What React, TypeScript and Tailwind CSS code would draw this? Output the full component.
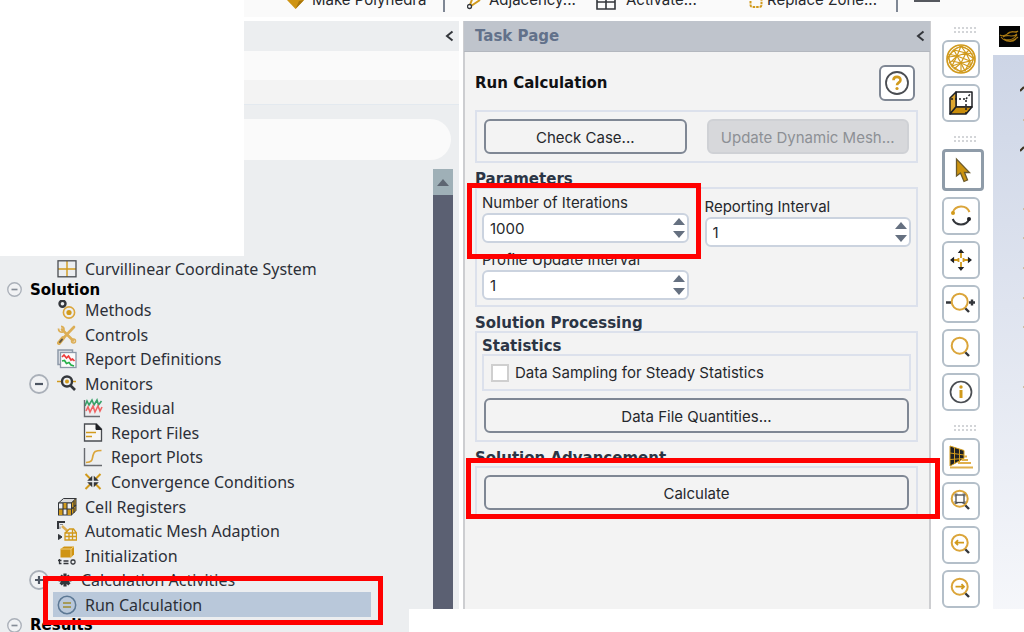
import { useId, useState } from "react";
import type { ReactNode } from "react";

const GOLD = "#d19a1c";
const DARK = "#33363b";

function Svg({ size = 20, children }: { size?: number; children: ReactNode }) {
  return (
    <svg width={size} height={size} viewBox="0 0 20 20" fill="none" aria-hidden="true" className="shrink-0">
      {children}
    </svg>
  );
}

/* ---------- tree icons ---------- */

const CoordinateIcon = () => (
  <Svg>
    <path d="M10 2v16M1 10h18" stroke={GOLD} strokeWidth="1.4" />
    <rect x="1" y="1.8" width="18" height="16" stroke="#4a4d52" strokeWidth="1.3" />
  </Svg>
);
const MethodsIcon = () => (
  <Svg>
    <circle cx="5.5" cy="3.700" r="3" stroke={DARK} strokeWidth="2.4" />
    <circle cx="12" cy="12.500" r="5.6" stroke="#dba53a" strokeWidth="1.6" />
    <circle cx="12" cy="12.500" r="2.6" fill={GOLD} />
  </Svg>
);
const ControlsIcon = () => (
  <Svg>
    <path d="M5 4.500l11 11" stroke="#dcae56" strokeWidth="2.6" strokeLinecap="round" />
    <path d="M1.5 3.5c0 3 2 4.200 4.500 3.500M4 1.500c2.500 0 3.500 2 2.700 4.500" stroke="#dcae56" strokeWidth="1.8" />
    <path d="M17 2L6 13.500" stroke="#dcae56" strokeWidth="2.600" strokeLinecap="round" />
    <path d="M6 13l-4 5" stroke="#dcae56" strokeWidth="4" strokeLinecap="round" />
    <path d="M5 14.500l-2 2.500" stroke="#5a5346" strokeWidth="2" strokeLinecap="round" />
    <circle cx="16.500" cy="16" r="2" stroke="#dcae56" strokeWidth="1.500" />
  </Svg>
);
const DefinitionsIcon = () => (
  <Svg>
    <path d="M1 1h14.500v14.500H1z" fill="#dfe3e8" stroke="#8d99a8" strokeWidth="1.500" />
    <rect x="3.500" y="3.500" width="15.500" height="15" fill="#fbfbfb" stroke="#8d99a8" strokeWidth="1.300" />
    <path d="M5 8l2-2 2.500 3 2-2 2.500 4 1.500-1 2 2" stroke="#ee3a3a" strokeWidth="1.700" />
    <path d="M5 12l2.500-.5 2 3 2.500-1 2 2.500 3 1" stroke="#27b04a" strokeWidth="1.700" />
  </Svg>
);
const MonitorsIcon = () => (
  <Svg>
    <path d="M0 7.500h4M15 7.500h4" stroke={GOLD} strokeWidth="1.400" />
    <circle cx="10" cy="7.500" r="5" stroke={DARK} strokeWidth="2.400" />
    <circle cx="10" cy="7.500" r="2" fill={GOLD} />
    <path d="M13 11l5 5" stroke={DARK} strokeWidth="2.600" />
  </Svg>
);
const ResidualIcon = () => (
  <Svg>
    <path d="M2 8l2-5 2 4 3-5 2 5 3-5 1.500 5 3-4" stroke="#38a169" strokeWidth="1.600" />
    <path d="M3 13l2-4 2 5 3-6 2 6 3-6 2 5 2-4" stroke="#f06464" strokeWidth="1.600" />
    <path d="M1.500 2v16.500H17" stroke="#686b70" strokeWidth="1.400" />
  </Svg>
);
const FileIcon = () => (
  <Svg>
    <path d="M1.500 1h12l5 5v12h-17z" stroke="#4a4d52" strokeWidth="1.300" fill="#f6f6f6" />
    <path d="M13 1v5.500h5.500z" fill="#1f2125" stroke="#1f2125" />
    <path d="M3 9.500h10M3 13.500h6" stroke={GOLD} strokeWidth="1.700" />
  </Svg>
);
const PlotIcon = () => (
  <Svg>
    <path d="M3 15.500c7-.5 6-3 7-7s2-5 8.500-5" stroke="#dba53a" strokeWidth="1.700" />
    <path d="M1.500 1v17.500H19" stroke="#686b70" strokeWidth="1.400" />
  </Svg>
);
const ConvergenceIcon = () => (
  <Svg>
    <path d="M2.500 2l5 5M17.500 2l-5 5M2.500 17l5-5M17.500 17l-5-5" stroke={GOLD} strokeWidth="2" />
    <path d="M6 8h2.500V5.500zM14 8h-2.500V5.500zM6 11h2.500v2.500zM14 11h-2.500v2.500z" fill={DARK} stroke={DARK} strokeWidth="1.500" />
  </Svg>
);
const CellsIcon = () => (
  <Svg>
    <path d="M1.500 6l5-4.500H19l-4.500 4.500z" fill="#d9d9d9" stroke={DARK} />
    <path d="M14.500 6L19 1.500v12L14.500 18z" fill={GOLD} stroke={DARK} />
    <rect x="1.500" y="6" width="13" height="12" fill="#eee" stroke={DARK} />
    <path d="M6 6h4v6H6zM2 12h4v6H2zM10 12h4v6h-4z" fill={GOLD} />
    <path d="M6 6v12M10 6v12M1.500 12h13M17 4v12M14.500 12l4.500-4" stroke={DARK} strokeWidth="1.100" />
  </Svg>
);
const AdaptionIcon = () => (
  <Svg>
    <path d="M8 1H1v7" stroke={DARK} strokeWidth="2.200" />
    <path d="M3 3.500h3M3 5.500V8" stroke="#8a8d92" />
    <path d="M1.500 13.500l3.500 2.500-3.500 2.500z" fill={DARK} stroke={DARK} />
    <path d="M5 5l6 5.500" stroke="#dcae56" strokeWidth="2.400" />
    <path d="M8 12h11.500v7H8zM8 12l4.500-4h4l3 4M8 15.500h11.500M12 12v7M15.500 8.500V19" stroke={GOLD} strokeWidth="1.300" />
  </Svg>
);
const InitializationIcon = () => (
  <Svg>
    <path d="M3.500 3L7 .5h10v8l-3 3H3.500z" fill="#cf9413" />
    <path d="M3.500 3h10.500l3-2.500M14 3v8" stroke="#f0cd7c" />
    <path d="M2.500 13v4.500h2M1 14.500h3.500M6.500 15h5M6.500 17.500h5" stroke={DARK} strokeWidth="1.300" />
    <rect x="14" y="14" width="4" height="4" rx="1.500" stroke={DARK} strokeWidth="1.300" />
  </Svg>
);
const ActivitiesIcon = () => (
  <Svg size={16}>
    <path d="M10 2v16M2 10h16M4.500 4.500l11 11M15.500 4.500l-11 11" stroke={DARK} strokeWidth="4" />
    <circle cx="10" cy="10" r="5" fill={DARK} />
  </Svg>
);
const RunIcon = () => (
  <Svg>
    <circle cx="10" cy="10" r="8.700" stroke="#5c7894" strokeWidth="1.500" />
    <path d="M6 8h8M6 12h8" stroke="#a59a58" strokeWidth="1.800" />
  </Svg>
);

function Expander({ open, large }: { open: boolean; large?: boolean }) {
  return (
    <svg width={large ? 20 : 15} height={large ? 20 : 15} viewBox="0 0 20 20" fill="none" aria-hidden="true">
      <circle cx="10" cy="10" r="9" fill="#f1f2f4" stroke="#aab0b9" strokeWidth="1.800" />
      <path d={open ? "M6 10h8" : "M6 10h8M10 6v8"} stroke={large ? "#4d5562" : "#858c97"} strokeWidth="2.200" />
    </svg>
  );
}

type Node = { label: string; icon: ReactNode; level: 1 | 2; expander?: "open" | "closed"; selected?: boolean };

const nodes: Node[] = [
  { label: "Methods", icon: <MethodsIcon />, level: 1 },
  { label: "Controls", icon: <ControlsIcon />, level: 1 },
  { label: "Report Definitions", icon: <DefinitionsIcon />, level: 1 },
  { label: "Monitors", icon: <MonitorsIcon />, level: 1, expander: "open" },
  { label: "Residual", icon: <ResidualIcon />, level: 2 },
  { label: "Report Files", icon: <FileIcon />, level: 2 },
  { label: "Report Plots", icon: <PlotIcon />, level: 2 },
  { label: "Convergence Conditions", icon: <ConvergenceIcon />, level: 2 },
  { label: "Cell Registers", icon: <CellsIcon />, level: 1 },
  { label: "Automatic Mesh Adaption", icon: <AdaptionIcon />, level: 1 },
  { label: "Initialization", icon: <InitializationIcon />, level: 1 },
  { label: "Calculation Activities", icon: <ActivitiesIcon />, level: 1, expander: "closed" },
  { label: "Run Calculation", icon: <RunIcon />, level: 1, selected: true },
];

function Highlight({ className }: { className: string }) {
  return <div aria-hidden="true" className={`pointer-events-none absolute z-10 border-[5px] border-[#ff0000] ${className}`} />;
}

function TreeRow({ node }: { node: Node }) {
  return (
    <li className="relative flex min-h-0 flex-1 items-center">
      <span className="flex w-[53px] shrink-0 justify-end pr-1">
        {node.expander && (
          <button type="button" aria-label={`Toggle ${node.label}`}>
            <Expander open={node.expander === "open"} large />
          </button>
        )}
      </span>
      <span className={`flex h-full flex-1 items-center pl-1 ${node.selected ? "mr-[62px] bg-[#b9c8da]" : ""}`}>
        {node.level === 2 && <span className="w-[26px]" />}
        {node.icon}
        <span className="pl-2">{node.label}</span>
      </span>
      {node.selected && <Highlight className="-top-4 right-[50px] -bottom-2 left-[43px]" />}
    </li>
  );
}

function Branch({ label, className }: { label: string; className: string }) {
  return (
    <div className={`flex items-center pl-[7px] font-['DejaVu_Sans',sans-serif] text-[15px] font-bold text-black ${className}`}>
      <button type="button" aria-label={`Toggle ${label}`} className="w-[23px]">
        <Expander open />
      </button>
      {label}
    </div>
  );
}

function Collapse({ label }: { label: string }) {
  return (
    <button type="button" aria-label={label} className="flex">
      <svg width="9" height="12" viewBox="0 0 9 12" fill="none" aria-hidden="true">
        <path d="M7.500 1.500L2 6l5.500 4.500" stroke="#33363b" strokeWidth="2" />
      </svg>
    </button>
  );
}

function OutlinePanel() {
  return (
    <aside className="flex w-[459px] shrink-0 flex-col bg-[#eceef0]">
      <div className="flex h-[30px] shrink-0 items-center justify-end pr-[5px]">
        <Collapse label="Collapse outline" />
      </div>
      <div className="h-[29px] shrink-0 bg-[#fafafa]" />
      <div className="h-[25px] shrink-0 border-b border-[#e3e9ef] bg-[#f3f3f3]" />
      <div className="shrink-0 pt-[14px] pr-2 pb-[9px]">
        <input type="search" aria-label="Filter" className="block h-[41px] w-full rounded-full bg-[#fafafa] outline-none" />
      </div>
      <div className="flex min-h-0 flex-1 pr-[6px]">
        <div className="min-w-0 flex-1 pt-[88px] font-['Noto_Sans',sans-serif] text-[16px] leading-5 text-[#2c3038]">
          <div className="flex h-6 items-center pl-[57px]">
            <CoordinateIcon />
            <span className="pl-2">Curvillinear Coordinate System</span>
          </div>
          <Branch label="Solution" className="h-[17px]" />
          <ul className="flex h-[319px] flex-col">
            {nodes.map((node) => (
              <TreeRow key={node.label} node={node} />
            ))}
          </ul>
          <Branch label="Results" className="h-4" />
        </div>
        <div className="w-5 bg-[#5b6072]">
          <button type="button" aria-label="Scroll up" className="flex h-[26px] w-full items-center justify-center bg-[#9fb0b7]">
            <svg width="12" height="7" viewBox="0 0 12 7" aria-hidden="true">
              <path d="M0 7l6-7 6 7z" fill="#5e6672" />
            </svg>
          </button>
        </div>
      </div>
    </aside>
  );
}

/* ---------- task page ---------- */

function Spinner({ label, initial, children }: { label: string; initial: number; children?: ReactNode }) {
  const id = useId();
  const [value, setValue] = useState(initial);
  return (
    <div className="relative">
      <label htmlFor={id} className="flex h-5 items-center">
        {label}
      </label>
      <div className="flex h-[30px] rounded-md border-2 border-[#cbd3df] bg-white">
        <input
          id={id}
          type="number"
          value={value}
          onChange={(e) => setValue(Number(e.target.value))}
          className="min-w-0 flex-1 appearance-none bg-transparent pt-[2px] pl-[6px] outline-none [appearance:textfield] [&::-webkit-inner-spin-button]:appearance-none"
        />
        <div className="flex w-[14px] flex-col justify-between py-[3px]">
          <button type="button" aria-label={`Increase ${label}`} onClick={() => setValue(value + 1)}>
            <svg width="12" height="7" viewBox="0 0 12 7" aria-hidden="true">
              <path d="M0 7l6-7 6 7z" fill="#657080" />
            </svg>
          </button>
          <button type="button" aria-label={`Decrease ${label}`} onClick={() => setValue(value - 1)}>
            <svg width="12" height="7" viewBox="0 0 12 7" aria-hidden="true">
              <path d="M0 0l6 7 6-7z" fill="#657080" />
            </svg>
          </button>
        </div>
      </div>
      {children}
    </div>
  );
}

function PushButton({ children, disabled }: { children: ReactNode; disabled?: boolean }) {
  return (
    <button
      type="button"
      disabled={disabled}
      className="h-[35px] min-w-0 flex-1 rounded-md border-2 border-[#7f8794] pt-[3px] disabled:border-[#cfd1d5] disabled:bg-[#d7d8db] disabled:text-[#8d9095]"
    >
      {children}
    </button>
  );
}

const headingFont = "font-['DejaVu_Sans',sans-serif] text-[15px] leading-4 font-bold";

function Heading({ children }: { children: ReactNode }) {
  return <h3 className={`flex h-6 items-end text-[#2b3545] ${headingFont}`}>{children}</h3>;
}

function TaskPage() {
  return (
    <section className="ml-1 flex w-[468px] shrink-0 flex-col border-x-2 border-[#cdced1] bg-[#f3f3f3] font-['Inter',sans-serif] text-[15px] text-[#26282c]">
      <header className="-mx-px flex h-[31px] shrink-0 items-center justify-between border-b border-[#b3b7be] bg-[#bfc4cc] pr-[5px] pl-[11px]">
        <h1 className={`text-[#62718a] ${headingFont}`}>Task Page</h1>
        <Collapse label="Collapse task page" />
      </header>
      <div className="pt-[13px] pr-[11px] pl-[10px]">
        <div className="flex h-9 items-center justify-between pr-[3px]">
          <h2 className={`text-[#101113] ${headingFont}`}>Run Calculation</h2>
          <button type="button" aria-label="Help" className="flex size-9 items-center justify-center rounded-md border-2 border-[#7f8794] bg-white">
            <svg width="26" height="26" viewBox="0 0 26 26" fill="none" aria-hidden="true">
              <circle cx="13" cy="13" r="11" stroke="#4a4d52" strokeWidth="1.800" />
              <path d="M9.500 10.200c0-4.500 7-4.300 7-.3 0 2.800-3.500 2.600-3.500 5.300" stroke={GOLD} strokeWidth="2.600" />
              <circle cx="13" cy="18.500" r="1.600" fill={GOLD} />
            </svg>
          </button>
        </div>
        <div className="mt-[9px] flex gap-5 border-2 border-[#dce1ec] p-[7px]">
          <PushButton>Check Case...</PushButton>
          <PushButton disabled>Update Dynamic Mesh...</PushButton>
        </div>
        <Heading>Parameters</Heading>
        <div className="grid grid-cols-2 gap-x-4 border-2 border-[#dce1ec] px-[5px] pt-1 pb-[5px]">
          <div className="flex flex-col gap-[7px]">
            <Spinner label="Number of Iterations" initial={1000}>
              <Highlight className="-top-[10px] -right-3 -bottom-4 -left-[15px]" />
            </Spinner>
            <Spinner label="Profile Update Interval" initial={1} />
          </div>
          <div className="pt-1">
            <Spinner label="Reporting Interval" initial={1} />
          </div>
        </div>
        <Heading>Solution Processing</Heading>
        <div className="border-2 border-[#dce1ec] px-[5px] pt-[5px] pb-[7px]">
          <h4 className={`text-[#2b3545] ${headingFont}`}>Statistics</h4>
          <label className="flex h-[37px] items-center gap-[6px] border-2 border-[#dce1ec] pl-[7px]">
            <input type="checkbox" className="size-[18px] appearance-none border-2 border-[#cfcfcf] bg-white checked:bg-[#657080]" />
            <span className="pt-[2px]">Data Sampling for Steady Statistics</span>
          </label>
          <div className="mt-[7px] flex px-[2px]">
            <PushButton>Data File Quantities...</PushButton>
          </div>
        </div>
        <Heading>Solution Advancement</Heading>
        <div className="relative flex border-2 border-[#dce1ec] px-[7px] pt-[7px] pb-[5px]">
          <PushButton>Calculate</PushButton>
          <Highlight className="-top-[10px] -right-[24px] -bottom-1 -left-[11px]" />
        </div>
      </div>
    </section>
  );
}

/* ---------- view tools ---------- */

const Lens = ({ children }: { children?: ReactNode }) => (
  <>
    <path d="M15.500 15.500l4.500 4.500" stroke={DARK} strokeWidth="2.400" />
    <circle cx="10.700" cy="9.700" r="8" stroke="#dba53a" strokeWidth="2" />
    {children}
  </>
);

const toolGroups: { label: string; drawing: ReactNode; active?: boolean }[][] = [
  [
    {
      label: "Display mesh",
      drawing: (
        <g stroke={GOLD} strokeWidth="1.200">
          <circle cx="12" cy="12" r="14" strokeWidth="1.700" />
          <circle cx="12" cy="12" r="12" strokeWidth=".8" />
          <path d="M12-1L5 3l-6 7 4 9 9 6 9-5 4-9-5-8zM5 3l3 6 9-3 3-3M8 9l-9 1M8 9l4 7 9-2-4-8M12 16l-9 3M12 16v9M21 14v6M12 16l9 4M8 9l-5 10M17 6l8 6-4 2M5 3l12 3M12-1l5 7M12 16L17 6M3 19L-1 10" />
          <path d="M8 9l13 5M12-1L8 9M3 14l9 2M5 22l7-6M16 24l-4-8M16 24l5-10M-1 7l9 2M17 6l7 1M0 16l3-2 5-5" />
        </g>
      ),
    },
    {
      label: "View orientation",
      drawing: (
        <g stroke="#1f2125" strokeWidth="1.500" strokeLinejoin="round">
          <path d="M7 1h16v15H7z" fill="#fff" />
          <path d="M1 7l6-6v15l-6 7z" fill="#dda62f" />
          <path d="M1 23l6-7h16l-6 7z" fill="#c98d0c" />
          <path d="M2 8h15v15M17 8l5-6" strokeDasharray="2 2" />
        </g>
      ),
    },
  ],
  [
    {
      label: "Select",
      active: true,
      drawing: <path d="M5.500 1v17l4-3 3.500 8.500 3.500-1.500-3-7.500h5z" fill="#cc930f" stroke="#6b5a2d" strokeWidth="1.300" />,
    },
    {
      label: "Rotate",
      drawing: (
        <>
          <path d="M3.700 8.500A9 9 0 0 1 20.500 8" stroke="#dba53a" strokeWidth="2" />
          <path d="M3.700 15A9 9 0 0 0 20.300 15" stroke={DARK} strokeWidth="2" />
          <circle cx="4" cy="9" r="2" fill={GOLD} />
          <circle cx="20" cy="15" r="2" fill="#1f2125" />
        </>
      ),
    },
    {
      label: "Pan",
      drawing: (
        <>
          <path d="M12 4v6M12 14v6M4 12h6M14 12h6M9.500 10v4M14.500 10v4" stroke={GOLD} strokeWidth="1.800" />
          <path d="M12 2l2 2.500h-4zM12 22l2-2.500h-4zM2 12l2.500-2v4zM22 12l-2.500-2v4z" fill="#1f2125" stroke="#1f2125" strokeWidth="1.200" />
        </>
      ),
    },
    {
      label: "Zoom in and out",
      drawing: (
        <>
          <path d="M-3 10.500h5.500M20 10.500h6M23 7.500v6" stroke={DARK} strokeWidth="2.400" />
          <Lens />
        </>
      ),
    },
    { label: "Zoom to area", drawing: <Lens /> },
    {
      label: "Probe",
      drawing: (
        <>
          <circle cx="12" cy="12" r="10.500" stroke="#4a4d52" strokeWidth="1.700" />
          <path d="M12 10v8" stroke={GOLD} strokeWidth="3" />
          <circle cx="12" cy="7" r="1.700" fill={GOLD} />
        </>
      ),
    },
  ],
  [
    {
      label: "Perspective",
      drawing: (
        <>
          <path d="M1 1l14 4.500v8L1 21z" fill="#1f2125" stroke={GOLD} />
          <path d="M5.500 2v17M10.500 4v13M1 8l14 2M1 14.500l14-1" stroke={GOLD} />
          <path d="M1 22.500h23M9 18h13M13 15h6M15 11.500h3" stroke="#e0b04c" strokeWidth="1.800" />
        </>
      ),
    },
    {
      label: "Fit to window",
      drawing: (
        <Lens>
          <rect x="7" y="6" width="8" height="7.500" stroke="#4a4d52" strokeWidth="1.300" />
          <path d="M6 7.500V5h2.500M13.500 5H16v2.500M16 12v2.500h-2.500M8.500 14.500H6V12" stroke="#4a4d52" strokeWidth=".8" />
        </Lens>
      ),
    },
    { label: "Previous view", drawing: <Lens><path d="M15 9.700H7M9 7.200L6.500 9.700l2.500 2.500" stroke={GOLD} strokeWidth="1.800" /></Lens> },
    { label: "Next view", drawing: <Lens><path d="M6.500 9.700H14M12.500 7.200L15 9.700l-2.500 2.500" stroke={GOLD} strokeWidth="1.800" /></Lens> },
  ],
];

function Grip() {
  return (
    <svg width="22" height="6" viewBox="0 0 22 6" aria-hidden="true">
      {[0, 4, 8, 12, 16, 20].map((x) => (
        <g key={x} fill="#d3d5d8">
          <rect x={x} y="0" width="2" height="2" />
          <rect x={x} y="4" width="2" height="2" />
        </g>
      ))}
    </svg>
  );
}

function ViewTools() {
  return (
    <nav aria-label="View tools" className="flex w-[62px] shrink-0 flex-col gap-[14px] bg-white pt-[6px] pl-[11px]">
      {toolGroups.map((group, i) => (
        <div key={i} className="flex flex-col gap-[6px]">
          <div className="mb-px pl-3">
            <Grip />
          </div>
          {group.map((tool) => (
            <button
              key={tool.label}
              type="button"
              aria-label={tool.label}
              className={`flex items-center justify-center bg-white ${
                tool.active ? "size-[42px] rounded-[4px] border-3 border-[#8f9ca9]" : "size-[38px] rounded-md border-2 border-[#b4bfc9]"
              }`}
            >
              <svg width="24" height="24" viewBox="0 0 24 24" fill="none" aria-hidden="true" className="overflow-visible">
                {tool.drawing}
              </svg>
            </button>
          ))}
        </div>
      ))}
    </nav>
  );
}

function Viewport() {
  return (
    <main className="flex min-w-0 flex-1 flex-col">
      <div className="flex h-[34px] shrink-0 items-start pt-[5px] pl-[6px]">
        <svg width="21" height="21" viewBox="0 0 21 21" fill="none" aria-hidden="true">
          <rect width="21" height="21" fill="#050505" />
          <path d="M1 9c4 3 8-2 11-3 3-1 5 1 7-1M2 11c5 6 11 5 17 0M4 11c5-4 9 2 14-3M8 8c4-4 7-1 10-2M5 13c5 2 9 1 13-4M8 15c4 1 7 0 9-2" stroke="#a87812" strokeWidth="1.100" />
        </svg>
      </div>
      <div className="flex flex-1 justify-end bg-linear-to-b from-[#cdd5e6] to-[#f7f8fb]">
        <svg width="4" height="360" viewBox="0 0 4 360" fill="none" aria-hidden="true">
          <path d="M0 36l4-4M0 96l4-4" stroke="#3d3320" strokeWidth="2" />
          <path d="M3 65h1M3 154h1M3 183h1M3 213h1M3 243h1M3 272h1M3 332h1" stroke="#c5b48e" strokeWidth="1.500" />
        </svg>
      </div>
    </main>
  );
}

/* ---------- ribbon ---------- */

function Ribbon() {
  const item = "flex h-5 shrink-0 items-center text-left";
  return (
    <header className="ml-[244px] flex h-[17px] shrink-0 flex-col justify-end overflow-hidden bg-[#fafafa] pb-[7px] font-['Inter',sans-serif] text-[15px] whitespace-nowrap text-[#26282c]">
      <div className="flex h-5 shrink-0 items-center pl-[43px]">
        <button type="button" className={`${item} w-[156px] gap-2`}>
          <svg width="17" height="18" viewBox="0 0 17 18" aria-hidden="true">
            <path d="M0 9l8.500 9L17 9 8.500 0z" fill="#cf9413" />
            <path d="M8.500 18L17 9l-5 1z" fill="#a8750b" />
          </svg>
          Make Polyhedra
        </button>
        <span className="h-6 w-[2px] bg-[#7f8794]" />
        <button type="button" className={`${item} ml-[22px] w-[129px] gap-2`}>
          <svg width="14" height="20" viewBox="0 0 14 20" fill="none" aria-hidden="true">
            <path d="M3 15L7 4M4 16l9-6" stroke={GOLD} strokeWidth="2" />
            <circle cx="2.500" cy="16.500" r="2" stroke={DARK} strokeWidth="1.300" fill="#fff" />
          </svg>
          Adjacency...
        </button>
        <button type="button" className={`${item} w-[153px] gap-[10px]`}>
          <svg width="20" height="20" viewBox="0 0 20 20" fill="none" aria-hidden="true">
            <path d="M1 1h18v18H1zM10 1v18M1 12h18M1 6h18" stroke={DARK} strokeWidth="1.600" />
          </svg>
          Activate...
        </button>
        <button type="button" className={`${item} w-[147px] gap-1`}>
          <svg width="14" height="18" viewBox="0 0 14 18" fill="none" aria-hidden="true">
            <rect x="1.500" y="1" width="11" height="15" rx="2" stroke={GOLD} strokeWidth="2" strokeDasharray="2.500 1" />
          </svg>
          Replace Zone...
        </button>
        <span className="h-6 w-[2px] bg-[#7f8794]" />
        <span className="ml-4 h-[3px] w-[26px] bg-[#55585e]" />
      </div>
    </header>
  );
}

export default function App() {
  return (
    <div className="relative flex h-screen flex-col overflow-hidden bg-white">
      <Ribbon />
      <div className="mt-1 flex min-h-0 flex-1">
        <OutlinePanel />
        <TaskPage />
        <ViewTools />
        <Viewport />
      </div>
      <div className="absolute top-0 left-0 h-64 w-[244px] bg-white" />
      <div className="absolute right-0 bottom-0 left-[409px] h-[23px] bg-white" />
    </div>
  );
}
